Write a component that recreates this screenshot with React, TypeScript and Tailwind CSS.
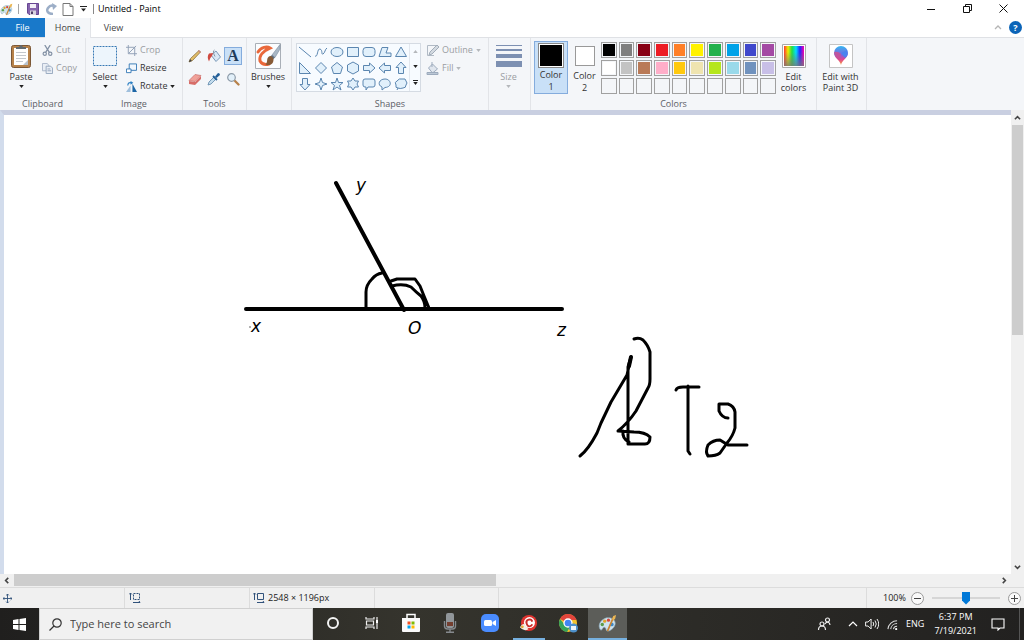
import type { ReactNode } from "react"
import { clsx } from "clsx"

const swatches = [
    "#000000", "#7f7f7f", "#880015", "#ed1c24", "#ff7f27", "#fff200", "#22b14c", "#00a2e8", "#3f48cc", "#a349a4",
    "#ffffff", "#c3c3c3", "#b97a57", "#ffaec9", "#ffc90e", "#efe4b0", "#b5e61d", "#99d9ea", "#7092be", "#c8bfe7",
    "", "", "", "", "", "", "", "", "", "",
]

const shapes = [
    { name: "Line", d: "M1 2L13 12" },
    { name: "Curve", d: "M1 11C4 13 3 3 6 4S7 10 9 9s2-5 4-6" },
    { name: "Oval", d: "M1 7C1 1 13 1 13 7S1 13 1 7z" },
    { name: "Rectangle", d: "M1.500 2.500h11v9h-11z" },
    { name: "Rounded rectangle", d: "M4 2.500h6q3 0 3 3v3q0 3-3 3H4q-3 0-3-3v-3q0-3 3-3z" },
    { name: "Polygon", d: "M1 11.500L4 2.500h6L8 8h5v3.500z" },
    { name: "Triangle", d: "M7 2L12.500 11.500H1.500z" },
    { name: "Right triangle", d: "M1.500 1.500V12.500H12.500z" },
    { name: "Diamond", d: "M7 1.500L12.500 7L7 12.500L1.500 7z" },
    { name: "Pentagon", d: "M7 1.500L12.500 6L10.500 12.500H3.500L1.500 6z" },
    { name: "Hexagon", d: "M7 1L12.500 4v6L7 13L1.500 10V4z" },
    { name: "Right arrow", d: "M1.500 4.500h6V2l5.500 5l-5.500 5V9.500h-6z" },
    { name: "Left arrow", d: "M12.500 4.500h-6V2L1 7l5.500 5V9.500h6z" },
    { name: "Up arrow", d: "M4.500 12.500v-6H2l5-5.500l5 5.500H9.500v6z" },
    { name: "Down arrow", d: "M4.500 1.500v6H2l5 5.500l5-5.500H9.500v-6z" },
    { name: "Four-point star", d: "M7 1L8.500 5.500L13 7L8.500 8.500L7 13L5.500 8.500L1 7L5.500 5.500z" },
    { name: "Five-point star", d: "M7 1L8.500 5.500H13L9.500 8.500L11 13L7 10L3 13L4.500 8.500L1 5.500H5.500z" },
    { name: "Six-point star", d: "M7 1L9 4H12.500L11 7L12.500 10H9L7 13L5 10H1.500L3 7L1.500 4H5z" },
    { name: "Rounded callout", d: "M3 2h8q2 0 2 2v4q0 2-2 2H6l-2 3v-3H3q-2 0-2-2V4q0-2 2-2z" },
    { name: "Oval callout", d: "M4 10C-1 8 1 2 7 2s8 8 0 8.500L4 13z" },
    { name: "Cloud callout", d: "M4 11q-3 0-2-3Q0 5 3 4q2-3 5-2q4-1 4 2q2 2 0 4q0 3-3 3q-3 1-5 0l-1 2" },
]

function Caret({ faded }: { faded?: boolean }) {
    return (
        <svg viewBox="0 0 6 4" className={clsx("h-[3px] w-[5px] shrink-0", faded ? "fill-[#b4b7bb]" : "fill-[#222]")} aria-hidden="true">
            <path d="M0 0h6L3 4z" />
        </svg>
    )
}

function Group({ label, className, children }: { label?: string; className: string; children: ReactNode }) {
    return (
        <section className={clsx("flex shrink-0 flex-col border-r border-[#e2e4e8]", className)}>
            <div className="flex flex-1 items-start">{children}</div>
            <p className="h-3 text-center leading-3 text-[#5c6066]">{label}</p>
        </section>
    )
}

function BigButton({ icon, children, caret, faded, className }: { icon: ReactNode; children: ReactNode; caret?: boolean; faded?: boolean; className: string }) {
    return (
        <button type="button" disabled={faded} className={clsx("flex shrink-0 flex-col items-center", faded ? "text-[#9a9da2]" : "text-[#333]", className)}>
            <span className="mb-[2px] flex h-[26px] items-center">{icon}</span>
            <span className="leading-[11px]">{children}</span>
            {caret && <span className="mt-[3px] flex"><Caret faded={faded} /></span>}
        </button>
    )
}

function RowButton({ icon, label, caret, faded }: { icon: ReactNode; label: string; caret?: boolean; faded?: boolean }) {
    return (
        <button type="button" disabled={faded} className={clsx("flex h-[18px] items-center gap-[3px] whitespace-nowrap", faded ? "text-[#9a9da2]" : "text-[#333]")}>
            {icon}
            {label}
            {caret && <Caret faded={faded} />}
        </button>
    )
}

function PaletteIcon({ className }: { className: string }) {
    return (
        <svg viewBox="0 0 20 20" className={className} aria-hidden="true">
            <path d="M3 17C-1 13 2 6 9 4c6-1 10 3 9 7s-5 7-8 7c-2 0-1-3-3-4s-2 3-4 3z" fill="#cfe3ee" stroke="#86a5b5" strokeWidth=".7" />
            <circle cx="4.500" cy="11" r="1.800" fill="#5a9b48" />
            <circle cx="7" cy="7.500" r="1.700" fill="#e0a52c" />
            <circle cx="11" cy="6.500" r="1.700" fill="#d5473d" />
            <circle cx="14.500" cy="11" r="2" fill="#3f89c8" />
            <path d="M10 18L16 4" stroke="#c98533" strokeWidth="1.800" />
            <path d="M15 5l1-3l3-1l-1 4l-2 2z" fill="#eab654" />
        </svg>
    )
}

function TitleBar() {
    return (
        <header className="flex h-[18px] shrink-0 items-center bg-white">
            <PaletteIcon className="size-[13px]" />
            <span className="ml-[5px] h-[10px] w-px bg-[#a5a5a5]" />
            <button type="button" aria-label="Save" className="ml-2">
                <svg viewBox="0 0 12 12" className="size-3"><path d="M.500.500h11v11H2L.500 10z" fill="#8664ad" stroke="#674692" /><path d="M3 1h6v4H3z" fill="#f3eff8" /><path d="M3 7.500h6V12H3z" fill="#d8d3df" /><path d="M4 8.500h2V11H4z" fill="#4d3d66" /></svg>
            </button>
            <button type="button" aria-label="Undo" className="ml-[6px]">
                <svg viewBox="0 0 12 12" className="size-3"><path d="M8 11C3 11 1 8 3 5s4-3 6-2" fill="none" stroke="#9caec7" strokeWidth="2.500" /><path d="M7 0l5 3-4 4z" fill="#9caec7" /></svg>
            </button>
            <button type="button" aria-label="New" className="ml-[5px]">
                <svg viewBox="0 0 12 13" className="h-[13px] w-3"><path d="M1 .500h7l3 3v9H1zM8 .500v3h3" fill="#fff" stroke="#777" /></svg>
            </button>
            <button type="button" aria-label="Customize toolbar" className="ml-[6px]">
                <svg viewBox="0 0 7 6" className="h-[6px] w-[7px]"><path d="M0 0h7v1H0zM1 2.500h5L3.500 5.500z" fill="#222" /></svg>
            </button>
            <span className="ml-[6px] h-[10px] w-px bg-[#888]" />
            <h1 className="ml-1 flex-1 text-[9px] text-black">Untitled - Paint</h1>
            <div className="flex h-full items-center gap-[27px] pr-4 pb-[2px]">
                <button type="button" aria-label="Minimize"><svg viewBox="0 0 9 9" className="size-[9px]"><path d="M0 5.500h8" stroke="#111" /></svg></button>
                <button type="button" aria-label="Restore"><svg viewBox="0 0 9 9" className="size-[9px]"><path d="M.500 2.500h6v6h-6zM2.500 2V.500h6v6H7" fill="none" stroke="#111" /></svg></button>
                <button type="button" aria-label="Close"><svg viewBox="0 0 9 9" className="size-[9px]"><path d="M.500.500l8 8M8.500.500l-8 8" stroke="#111" /></svg></button>
            </div>
        </header>
    )
}

function Tabs() {
    return (
        <nav className="flex h-[19px] shrink-0 items-stretch bg-white text-[#444]">
            <button type="button" className="w-[45px] bg-[#1979ca] text-white">File</button>
            <button type="button" className="relative z-10 -mb-px w-[46px] border-r border-[#e2e4e8] bg-[#f4f6f9]">Home</button>
            <button type="button" className="w-[45px]">View</button>
            <div className="ml-auto flex items-center gap-[7px] pr-[2px]">
                <button type="button" aria-label="Collapse ribbon"><svg viewBox="0 0 8 5" className="h-[5px] w-2"><path d="M1 4l3-3l3 3" fill="none" stroke="#b5b5b5" strokeWidth="1.300" /></svg></button>
                <button type="button" aria-label="Help" className="flex size-[13px] items-center justify-center rounded-full bg-[#0b64b8] font-bold text-white">?</button>
            </div>
        </nav>
    )
}

function Tool({ label, selected, children }: { label: string; selected?: boolean; children: ReactNode }) {
    return (
        <button type="button" aria-label={label} className={clsx("flex size-[18px] items-center justify-center border", selected ? "border-[#84acdd] bg-[#c9e0f7]" : "border-transparent")}>
            {children}
        </button>
    )
}

function Ribbon() {
    return (
        <div className="flex h-[73px] shrink-0 overflow-hidden border-t border-[#dfe1e5] bg-[#f4f6f9] text-[9px]">
            <Group label="Clipboard" className="w-[86px]">
                <BigButton caret className="w-[42px] pt-[5px]" icon={
                    <svg viewBox="0 0 20 24" className="h-6 w-5"><rect x=".500" y="1.500" width="19" height="22" rx="2" fill="#b7824a" stroke="#7b5736" /><path d="M3 4h14v17H3z" fill="#fff" /><path d="M5 5V3h3q2-4 4 0h3v2z" fill="#636a70" /><path d="M5 8.500h10M5 11.500h10M5 14.500h10M5 17.500h7" stroke="#c3c8ce" /><path d="M12 21l5-5v5z" fill="#b9c2cc" /></svg>
                }>Paste</BigButton>
                <div className="flex flex-col pt-[3px]">
                    <RowButton faded label="Cut" icon={<svg viewBox="0 0 12 12" className="size-[11px]"><path d="M3 0l5 8M9 0L4 8" stroke="#8391a5" strokeWidth="1.400" /><circle cx="3" cy="9.500" r="1.800" fill="none" stroke="#8391a5" strokeWidth="1.300" /><circle cx="9" cy="9.500" r="1.800" fill="none" stroke="#8391a5" strokeWidth="1.300" /></svg>} />
                    <RowButton faded label="Copy" icon={<svg viewBox="0 0 12 12" className="size-[11px]"><path d="M.500.500h5l2 2v6h-7z" fill="#e9eef5" stroke="#a7b4c7" /><path d="M4.500 3.500h5l2 2v6h-7z" fill="#e9eef5" stroke="#93a4bc" /><path d="M6 6.500h3M6 8.500h4" stroke="#93a4bc" /></svg>} />
                </div>
            </Group>
            <Group label="Image" className="w-[97px]">
                <BigButton caret className="w-[38px] pt-[5px]" icon={
                    <svg viewBox="0 0 26 22" className="h-[22px] w-[26px]"><rect x="1.500" y="1.500" width="23" height="19" fill="#edf5fc" stroke="#3779b5" strokeDasharray="2 1" /></svg>
                }>Select</BigButton>
                <div className="flex flex-col pt-[3px] pl-[2px]">
                    <RowButton faded label="Crop" icon={<svg viewBox="0 0 12 12" className="size-[11px]"><path d="M2.500 0v9.500H12M0 2.500h9.500V12M3 9l8-8" fill="none" stroke="#8d9db3" /></svg>} />
                    <RowButton label="Resize" icon={<svg viewBox="0 0 12 12" className="size-[11px]"><path d="M3.500 1h8v7h-8z" fill="#f1f7fd" stroke="#3176b5" /><path d="M.500 6.500h5v4h-5z" fill="#fff" stroke="#3176b5" /></svg>} />
                    <RowButton caret label="Rotate" icon={<svg viewBox="0 0 12 12" className="size-[11px]"><path d="M5 5v7H0z" fill="#9fbfdd" /><path d="M7 3v9h5z" fill="#1c66a6" /><path d="M2 5q0-4 4-3" fill="none" stroke="#2d80c4" strokeWidth="1.300" /><path d="M5 0l3 2-3 2z" fill="#2d80c4" /></svg>} />
                </div>
            </Group>
            <Group label="Tools" className="w-[64px]">
                <div className="grid grid-cols-3 gap-x-px gap-y-[5px] pt-[9px] pl-[3px]">
                    <Tool label="Pencil"><svg viewBox="0 0 14 14" className="size-[14px]"><path d="M1 13l1.500-3.500L11 1.500l1.500 1.500l-8 8.500z" fill="#e2bd67" stroke="#8c7140" strokeWidth=".8" /><path d="M1 13l1-3l2 2z" fill="#444" /><path d="M10 2l1-1l2 2l-1 1z" fill="#c98a80" /></svg></Tool>
                    <Tool label="Fill with color"><svg viewBox="0 0 14 14" className="size-[14px]"><path d="M4 6l5-4l4.500 6L9 12.500z" fill="#dae8f5" stroke="#7b99b8" /><path d="M8 7.500Q5 2 7.500 1" fill="none" stroke="#8696a6" /><path d="M6 4L2 4.500Q-.500 8 2 12.500Q3 8.500 5 7z" fill="#cf4a40" /></svg></Tool>
                    <Tool label="Text" selected><span className="font-['Liberation_Serif',serif] text-[16px] leading-4 font-bold text-[#1f3b5a]">A</span></Tool>
                    <Tool label="Eraser"><svg viewBox="0 0 14 14" className="size-[14px]"><path d="M1 8.500l6-6l6 1l-6 6z" fill="#f1a199" stroke="#c8706b" strokeWidth=".7" /><path d="M1 9v3l6 1v-3zM7 13l6-6V4l-6 6z" fill="#d76d68" /></svg></Tool>
                    <Tool label="Color picker"><svg viewBox="0 0 14 14" className="size-[14px]"><path d="M1 13l1-3l5-5l2 2l-5 5z" fill="#c3dced" stroke="#5d86aa" strokeWidth=".8" /><path d="M6 4l4 4" stroke="#245f98" strokeWidth="1.800" /><path d="M8 4.500l3-3.500q2 0 2 2L9.500 6z" fill="#245f98" /></svg></Tool>
                    <Tool label="Magnifier"><svg viewBox="0 0 14 14" className="size-[14px]"><path d="M8.500 8.500l4 4" stroke="#b7814a" strokeWidth="2.300" strokeLinecap="round" /><circle cx="5.500" cy="5.500" r="3.800" fill="#e2f0fa" stroke="#8c9aa8" strokeWidth="1.200" /></svg></Tool>
                </div>
            </Group>
            <Group className="w-[45px]">
                <BigButton caret className="w-full pt-[5px] pr-[2px]" icon={
                    <svg viewBox="0 0 26 26" className="size-[26px]">
                        <path d="M.500.500h25v25H.500z" fill="#fbfdff" stroke="#a9afb7" />
                        <path d="M3 9C6 4 12 3 15 5C8 8 4 13 5 18q3 5 9 3" fill="none" stroke="#e9683b" strokeWidth="3" strokeLinecap="round" />
                        <path d="M25 1.500V6l-5 8.500l-3-2.500z" fill="#a9b8c6" stroke="#7a8c9d" strokeWidth=".6" />
                        <path d="M17 12l3 2.500l-2 2l-3-3z" fill="#5f7081" />
                        <path d="M15 13q3 0 3.500 3.500c0 5-4 6.500-8 5c3-2 0-7 4.500-8.500z" fill="#875b37" />
                    </svg>
                }>Brushes</BigButton>
            </Group>
            <Group label="Shapes" className="w-[197px]">
                <div className="mt-[5px] ml-1 flex h-[49px] border border-[#d5dbe3] bg-[#f7fbff]">
                    <div className="grid grid-cols-7">
                        {shapes.map(({ name, d }) => (
                            <button key={name} type="button" aria-label={name} className="flex size-4 items-center justify-center">
                                <svg viewBox="0 0 14 14" className="size-[14px]"><path d={d} fill={name === "Line" || name === "Curve" ? "none" : "#e1f0fb"} stroke="#5b86b0" /></svg>
                            </button>
                        ))}
                    </div>
                    <div className="flex w-[11px] flex-col items-center justify-around border-l border-[#e2e7ee]">
                        <button type="button" aria-label="Scroll shapes up" className="flex rotate-180"><Caret faded /></button>
                        <button type="button" aria-label="Scroll shapes down" className="flex"><Caret /></button>
                        <button type="button" aria-label="More shapes" className="flex border-t border-[#222] pt-px"><Caret /></button>
                    </div>
                </div>
                <div className="flex flex-col pt-[3px] pl-[5px]">
                    <RowButton faded caret label="Outline" icon={<svg viewBox="0 0 13 13" className="size-[13px]"><path d="M10 1.500H1.500v10H8" fill="none" stroke="#b1bac5" /><path d="M3 11l1-3l7-7l2 2l-7 7z" fill="#d4dae1" stroke="#a2adb9" /></svg>} />
                    <RowButton faded caret label="Fill" icon={<svg viewBox="0 0 13 13" className="size-[13px]"><path d="M2.500 6l4-4l5 5l-5 4z" fill="#e0e6ee" stroke="#9dabbd" /><path d="M6 5V0M1 10.500h11v2H1z" fill="#bbc7d5" stroke="#9dabbd" /></svg>} />
                </div>
            </Group>
            <Group className="w-[42px]">
                <BigButton caret faded className="w-full pt-[5px] pr-[2px]" icon={
                    <svg viewBox="0 0 26 24" className="h-6 w-[26px]"><path d="M0 1h26v1H0zM0 5h26v2H0zM0 10h26v4H0zM0 17h26v6H0z" fill="#7d90b2" /></svg>
                }>Size</BigButton>
            </Group>
            <Group label="Colors" className="w-[286px]">
                <button type="button" className="mt-[3px] ml-[3px] flex h-[53px] w-[34px] flex-col items-center border border-[#84acdd] bg-[#c9e0f7] pt-px text-[#333]">
                    <span className="mb-px block size-[26px] border border-[#888] bg-black ring-1 ring-white ring-inset" />
                    <span className="leading-3">Color<br />1</span>
                </button>
                <button type="button" className="mt-[3px] flex h-[53px] w-[33px] flex-col items-center pt-[5px] text-[#333]">
                    <span className="mb-1 block size-5 border border-[#999] bg-white" />
                    <span className="leading-3">Color<br />2</span>
                </button>
                <div className="mt-1 grid w-[175px] grid-cols-10 gap-[2px]">
                    {swatches.map((color, i) => (
                        <button key={i} type="button" aria-label={color || "Empty custom color"} className="h-4 border border-[#a0a0a0] p-px">
                            <span className="block size-full" style={{ backgroundColor: color || undefined }} />
                        </button>
                    ))}
                </div>
                <BigButton className="w-[35px] pt-[5px]" icon={
                    <svg viewBox="0 0 24 24" className="size-6">
                        <defs>
                            <linearGradient id="hue"><stop offset="0" stopColor="#f33" /><stop offset=".2" stopColor="#ee0" /><stop offset=".4" stopColor="#2d4" /><stop offset=".6" stopColor="#0df" /><stop offset=".8" stopColor="#22f" /><stop offset="1" stopColor="#f0a" /></linearGradient>
                            <linearGradient id="fade" x2="0" y2="1"><stop offset=".3" stopColor="#777" stopOpacity="0" /><stop offset="1" stopColor="#777" stopOpacity=".8" /></linearGradient>
                        </defs>
                        <path d="M.500.500h23v23H.500z" fill="#fff" stroke="#aaa" /><path d="M2 2h20v20H2z" fill="url(#hue)" /><path d="M2 2h20v20H2z" fill="url(#fade)" />
                    </svg>
                }>Edit<br />colors</BigButton>
            </Group>
            <Group className="w-[50px]">
                <BigButton className="w-full pt-[5px] pr-[2px] whitespace-nowrap" icon={
                    <svg viewBox="0 0 24 24" className="size-6">
                        <defs><linearGradient id="drop" x2="0" y2="1"><stop offset="0" stopColor="#32b8f2" /><stop offset=".45" stopColor="#7b65e0" /><stop offset=".7" stopColor="#e04492" /><stop offset="1" stopColor="#f5a13a" /></linearGradient></defs>
                        <path d="M.500.500h23v23H.500z" fill="#fff" stroke="#c4c4c4" /><path d="M12 21C11 16 5 14 5 9a7 7 0 0 1 14 0c0 5-6 7-7 12z" fill="url(#drop)" /><path d="M12 9l6-3q2 5-2 8z" fill="#4a83ef" /><path d="M5 8q4-1 7 2l-1 6Q5 13 5 8z" fill="#d0508f" opacity=".8" />
                    </svg>
                }>Edit with<br />Paint 3D</BigButton>
            </Group>
        </div>
    )
}

function Drawing() {
    return (
        <svg className="size-full" role="img" aria-label="Angle sketch">
            <g transform="translate(-4 -115)" fill="none" stroke="#000" strokeLinecap="round" strokeLinejoin="round">
                <path d="M246 309H562M336 183L404 310" strokeWidth="4" />
                <path d="M382 273Q376 274 372 279Q366 285 366 292V308M391 281L397 279H415L420 286L424 296L429 308M392 286Q403 283 411 287Q416 292 421 296Q425 301 425 308" strokeWidth="3" />
                <path d="M580 456Q588 450 597 433L601 423L611 402L627 375L631 357L628 367V444H645Q650 444 650 437Q645 432 634 432L618 431Q628 423 636 411L648 388Q650 385 650 379V352Q648 345 643 340Q639 337 634 339M623 431Q622 439 629 442" strokeWidth="3" />
                <path d="M631 357L629 366" strokeWidth="4" />
                <path d="M676 390Q677 387 683 387H699M688 386V451L690 454M728 418Q722 418 719 411V404H728Q734 406 735 412V428Q733 436 727 443L720 453Q716 456 708 456Q705 452 708 445Q713 440 720 440L728 445H747" strokeWidth="3" />
            </g>
            <g className="fill-black font-['DejaVu_Sans',sans-serif] text-[17px] italic">
                <text x="352" y="76">y</text>
                <text x="247" y="217">x</text>
                <text x="404" y="219">O</text>
                <text x="553" y="221">z</text>
            </g>
            <circle cx="246" cy="212" r="1" fill="#999" />
        </svg>
    )
}

function ScrollArrow({ label, className }: { label: string; className?: string }) {
    return (
        <button type="button" aria-label={label} className="flex size-[13px] shrink-0 items-center justify-center">
            <svg viewBox="0 0 8 8" className={clsx("size-[7px]", className)}><path d="M1 6l3-3l3 3" fill="none" stroke="#444" strokeWidth="1.800" /></svg>
        </button>
    )
}

function StatusBar() {
    return (
        <footer className="flex h-[21px] shrink-0 items-center border-t border-[#dcdcdc] bg-[#f0f0f0] text-[9px] text-[#222]">
            <div className="flex h-full w-[125px] items-center border-r border-[#dcdcdc] pl-[3px]">
                <svg viewBox="0 0 10 10" className="size-[9px]"><path d="M5 0v10M0 5h10M3.500 1.500L5 0l1.500 1.500M3.500 8.500L5 10l1.500-1.500M1.500 3.500L0 5l1.500 1.500M8.500 3.500L10 5L8.500 6.500" fill="none" stroke="#31527b" /></svg>
            </div>
            <div className="flex h-full w-[125px] items-center border-r border-[#dcdcdc] pl-1">
                <svg viewBox="0 0 12 10" className="h-[10px] w-3"><path d="M1.500 0v7M0 1.500L1.500 0L3 1.500M4 9.500h7M10 8l1 1.500" fill="none" stroke="#31527b" /><path d="M4.500.500h6v6h-6z" fill="none" stroke="#31527b" strokeDasharray="2 1" /></svg>
            </div>
            <div className="flex h-full w-[125px] items-center gap-[3px] border-r border-[#dcdcdc] pl-[3px]">
                <svg viewBox="0 0 12 10" className="h-[10px] w-3"><path d="M1.500 0v7M0 1.500L1.500 0L3 1.500M4 9.500h7M10 8l1 1.500M4.500.500h6v6h-6z" fill="none" stroke="#31527b" /></svg>
                2548 × 1196px
            </div>
            <div className="h-full w-[124px] border-r border-[#dcdcdc]" />
            <div className="ml-auto flex h-full items-center border-l border-[#dcdcdc] pr-[3px] pl-4">
                <span className="w-7">100%</span>
                <button type="button" aria-label="Zoom out"><svg viewBox="0 0 13 13" className="size-[13px]"><circle cx="6.500" cy="6.500" r="6" fill="#fafafa" stroke="#999" /><path d="M3 6.500h7" stroke="#444" /></svg></button>
                <input
                    type="range"
                    aria-label="Zoom"
                    defaultValue={50}
                    className="mx-2 h-[14px] w-[68px] appearance-none bg-linear-to-r from-[#d6d6d6] to-[#d6d6d6] bg-[length:100%_2px] bg-center bg-no-repeat [&::-webkit-slider-thumb]:h-[13px] [&::-webkit-slider-thumb]:w-2 [&::-webkit-slider-thumb]:appearance-none [&::-webkit-slider-thumb]:bg-[#0078d7] [&::-webkit-slider-thumb]:[clip-path:polygon(0_0,100%_0,100%_70%,50%_100%,0_70%)]"
                />
                <button type="button" aria-label="Zoom in"><svg viewBox="0 0 13 13" className="size-[13px]"><circle cx="6.500" cy="6.500" r="6" fill="#fafafa" stroke="#999" /><path d="M3 6.500h7M6.500 3v7" stroke="#444" /></svg></button>
            </div>
        </footer>
    )
}

function TaskButton({ label, open, active, children }: { label: string; open?: boolean; active?: boolean; children: ReactNode }) {
    return (
        <button type="button" aria-label={label} className={clsx("flex flex-col items-center", active && "bg-[#5c5d59]")}>
            <span className="flex flex-1 items-center">{children}</span>
            <span className={clsx("h-[2px]", active ? "w-full" : "w-8", (open || active) && "bg-[#76b0df]")} />
        </button>
    )
}

function Taskbar() {
    return (
        <div className="flex h-8 shrink-0 bg-linear-to-r from-[#201f1e] via-[#35342d] via-40% to-[#222120] text-white">
            <button type="button" aria-label="Start" className="flex w-[39px] items-center justify-center">
                <svg viewBox="0 0 13 13" className="size-[13px] fill-white"><path d="M0 2l5.500-1v5H0zM6.500.900L13 0v6H6.500zM0 7h5.500v5L0 11zM6.500 7H13v6l-6.500-.900z" /></svg>
            </button>
            <label className="flex w-[274px] items-center gap-[8px] border border-[#d0d0d0] bg-[#f1f1f1] pl-[9px]">
                <svg viewBox="0 0 13 13" className="size-[13px]"><circle cx="8" cy="5" r="4.200" fill="none" stroke="#333" strokeWidth="1.200" /><path d="M5 8L.500 12.500" stroke="#333" strokeWidth="1.300" /></svg>
                <input type="text" aria-label="Search" placeholder="Type here to search" className="min-w-0 flex-1 bg-transparent text-[11px] text-[#333] outline-none placeholder:text-[#444]" />
            </label>
            <div className="grid w-[314px] grid-cols-8">
                <TaskButton label="Cortana"><svg viewBox="0 0 14 14" className="size-[14px]"><circle cx="7" cy="7" r="5" fill="none" stroke="#f3f3f3" strokeWidth="2" /></svg></TaskButton>
                <TaskButton label="Task view"><svg viewBox="0 0 14 14" className="size-[14px]"><path d="M1 1v2h8V1M1 13v-2h8v2M1.500 5h7v4h-7zM12 1v12" fill="none" stroke="#eee" strokeWidth="1.200" /><path d="M11 4h2v3h-2z" fill="#fff" /></svg></TaskButton>
                <TaskButton label="Microsoft Store"><svg viewBox="0 0 20 20" className="size-5"><path d="M6 6V1.500h8V6" fill="none" stroke="#fff" strokeWidth="1.500" /><path d="M1 5h18v13q0 1-1 1H2q-1 0-1-1z" fill="#fafafa" /><path d="M6.500 8.500h3v3h-3z" fill="#f25022" /><path d="M10.500 8.500h3v3h-3z" fill="#7fba00" /><path d="M6.500 12.500h3v3h-3z" fill="#00a4ef" /><path d="M10.500 12.500h3v3h-3z" fill="#ffb900" /></svg></TaskButton>
                <TaskButton label="Voice recorder"><svg viewBox="0 0 20 20" className="size-5"><rect x="6" y="0" width="8" height="15" rx="2" fill="#91969a" /><path d="M7 9h6v4H7z" fill="#743f30" /><path d="M4.500 8v5q0 3 3 3h5q3 0 3-3V8M10 16v3M6 19.200h8" fill="none" stroke="#85898d" strokeWidth="1.400" /></svg></TaskButton>
                <TaskButton label="Zoom meetings"><svg viewBox="0 0 20 20" className="size-5"><rect x="1" y="1" width="18" height="18" rx="5" fill="#4a8cff" /><rect x="4" y="7" width="8" height="6" rx="1.500" fill="#fff" /><path d="M12.500 9L16 7v6l-3.500-2z" fill="#fff" /></svg></TaskButton>
                <TaskButton label="Recorder" open><svg viewBox="0 0 20 20" className="size-[19px]"><circle cx="10.500" cy="9.500" r="8.500" fill="#df332f" /><circle cx="11" cy="9" r="5.800" fill="#fff" /><path d="M14 8q-1-3-4-2t-2 4t3 3t3-2" fill="none" stroke="#c72d2a" strokeWidth="2" /><path d="M1 14q3-5 5-3l4 5q-5 3-9-2z" fill="#f3eee4" /><circle cx="3.500" cy="13.500" r="1.500" fill="#e6a73a" /></svg></TaskButton>
                <TaskButton label="Chrome"><svg viewBox="0 0 20 20" className="size-5"><circle cx="10" cy="10" r="9" fill="#f4c22c" /><path d="M10 10L2 5.900A9 9 0 0 1 18.500 7H10z" fill="#e2453c" /><path d="M2 5.900A9 9 0 0 0 9 19l4-7l-6 0z" fill="#35a35a" /><circle cx="10" cy="10" r="4" fill="#4285f4" stroke="#fff" strokeWidth="1.300" /><circle cx="15.500" cy="15" r="4.500" fill="#4e91cb" /><path d="M13 13h5v4h-5z" fill="#eef5fa" /></svg></TaskButton>
                <TaskButton label="Paint" active><PaletteIcon className="size-[19px]" /></TaskButton>
            </div>
            <div className="ml-auto flex items-center">
                <button type="button" aria-label="People" className="mr-[17px]"><svg viewBox="0 0 14 14" className="size-[14px]"><g fill="none" stroke="#eee" strokeWidth="1.200"><circle cx="5" cy="7" r="2" /><path d="M1.500 13q0-4 3.500-4t3.500 4M8 7q1-2 3-2q2 1 2 3" /><circle cx="10.500" cy="3" r="2" /></g></svg></button>
                <button type="button" aria-label="Show hidden icons" className="mr-[7px]"><svg viewBox="0 0 10 6" className="h-[6px] w-[10px]"><path d="M1 5l4-4l4 4" fill="none" stroke="#fff" strokeWidth="1.200" /></svg></button>
                <button type="button" aria-label="Volume" className="mr-2"><svg viewBox="0 0 14 12" className="h-3 w-[14px]"><path d="M.600 4h2.500l3-3v10l-3-3H.600zM8 4q1.500 2 0 4M10 2.500q2.500 3.500 0 7M12 1q3.500 5 0 10" fill="none" stroke="#eee" /></svg></button>
                <button type="button" aria-label="Network" className="mr-2"><svg viewBox="0 0 12 12" className="size-[11px]"><path d="M1 11A10 10 0 0 1 11 2M4 11a7 7 0 0 1 7-6M7 11a4 4 0 0 1 4-3" fill="none" stroke="#ddd" strokeWidth="1.100" /><circle cx="10" cy="11" r="1.200" fill="#fff" /></svg></button>
                <span className="mr-[10px] text-[9px]">ENG</span>
                <time className="mr-[14px] text-center text-[9px] leading-[14px]">6:37 PM<br />7/19/2021</time>
                <button type="button" aria-label="Notifications" className="mr-[14px]"><svg viewBox="0 0 14 13" className="h-[13px] w-[14px]"><path d="M1 1h12v9H9l-2 2v-2H1z" fill="none" stroke="#fff" strokeWidth="1.100" /></svg></button>
                <span className="h-8 w-[5px] border-l border-[#555]" />
            </div>
        </div>
    )
}

function App() {
    return (
        <main className="flex h-screen min-h-[400px] flex-col overflow-hidden bg-[#f0f0f0] font-['Open_Sans','Noto_Sans',sans-serif] text-[9px]">
            <TitleBar />
            <Tabs />
            <Ribbon />
            <div className="flex min-h-0 flex-1">
                <div className="min-w-0 flex-1 border-t-[5px] border-l-4 border-t-[#c9cfe1] border-l-[#d2dcec] bg-white">
                    <Drawing />
                </div>
                <div className="flex w-[13px] flex-col pt-px">
                    <ScrollArrow label="Scroll up" />
                    <div className="min-h-0 flex-1"><div className="mx-px mt-px h-[48%] bg-[#cdcdcd]" /></div>
                    <ScrollArrow label="Scroll down" className="rotate-180" />
                </div>
            </div>
            <div className="flex h-[13px] shrink-0">
                <ScrollArrow label="Scroll left" className="-rotate-90" />
                <div className="flex-1 pl-px"><div className="h-3 w-[49%] bg-[#cdcdcd]" /></div>
                <ScrollArrow label="Scroll right" className="rotate-90" />
                <div className="w-[13px]" />
            </div>
            <StatusBar />
            <Taskbar />
        </main>
    )
}

export default App
